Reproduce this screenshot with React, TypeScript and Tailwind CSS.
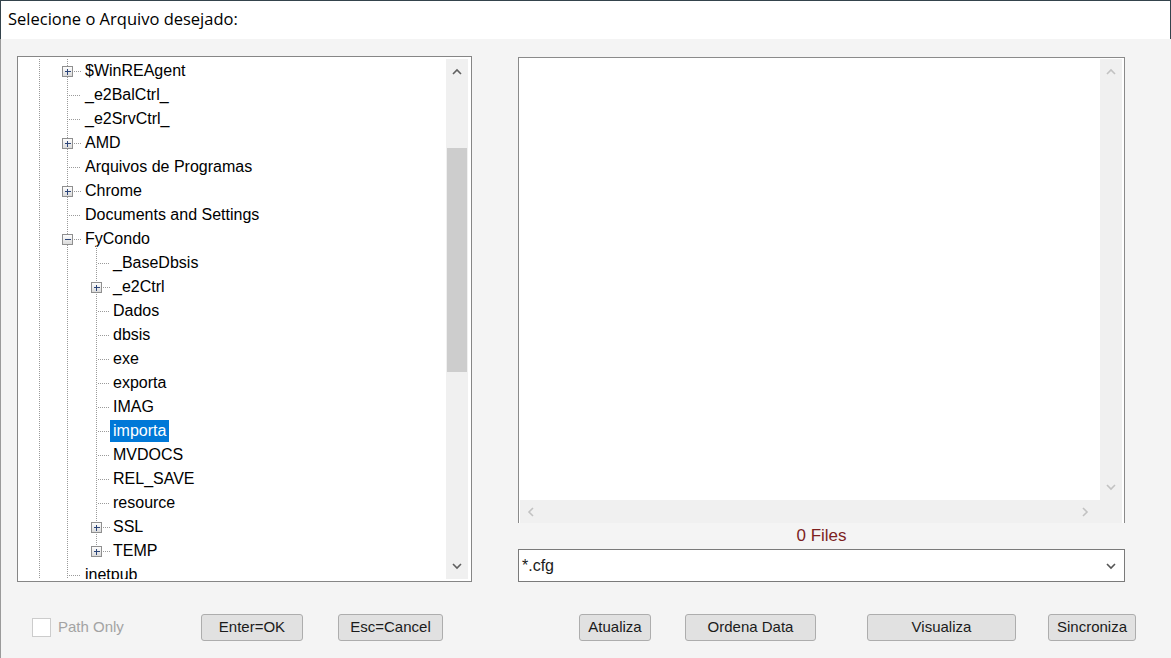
import React from 'react';

type TreeNode = {
  name: string;
  level: 2 | 3;
  toggle?: '+' | '-';
  selected?: boolean;
};

const nodes: TreeNode[] = [
  { name: '$WinREAgent', level: 2, toggle: '+' },
  { name: '_e2BalCtrl_', level: 2 },
  { name: '_e2SrvCtrl_', level: 2 },
  { name: 'AMD', level: 2, toggle: '+' },
  { name: 'Arquivos de Programas', level: 2 },
  { name: 'Chrome', level: 2, toggle: '+' },
  { name: 'Documents and Settings', level: 2 },
  { name: 'FyCondo', level: 2, toggle: '-' },
  { name: '_BaseDbsis', level: 3 },
  { name: '_e2Ctrl', level: 3, toggle: '+' },
  { name: 'Dados', level: 3 },
  { name: 'dbsis', level: 3 },
  { name: 'exe', level: 3 },
  { name: 'exporta', level: 3 },
  { name: 'IMAG', level: 3 },
  { name: 'importa', level: 3, selected: true },
  { name: 'MVDOCS', level: 3 },
  { name: 'REL_SAVE', level: 3 },
  { name: 'resource', level: 3 },
  { name: 'SSL', level: 3, toggle: '+' },
  { name: 'TEMP', level: 3, toggle: '+' },
  { name: 'inetpub', level: 2 },
];

const ROW = 24;
const X1 = 19.5;
const X2 = 47.5;
const X3 = 76.5;

// dotted connector lines + expander boxes of the tree
const TreeLines = () => {
  const h = nodes.length * ROW + 10;
  const cy = (i: number) => i * ROW + 12.5;
  const dot = { stroke: '#9a9a9a', strokeWidth: 1, strokeDasharray: '1 1' };
  const fy = nodes.findIndex((n) => n.name === 'FyCondo');
  const temp = nodes.findIndex((n) => n.name === 'TEMP');

  return (
    <svg className="pointer-events-none absolute left-0 top-0" width={110} height={h} shapeRendering="crispEdges">
      <defs>
        <linearGradient id="box" x1="0" y1="0" x2="0" y2="1">
          <stop offset="0" stopColor="#ffffff" />
          <stop offset="1" stopColor="#d9d9d9" />
        </linearGradient>
      </defs>
      <line x1={X1} y1={0} x2={X1} y2={h} {...dot} />
      <line x1={X2} y1={0} x2={X2} y2={h} {...dot} />
      <line x1={X3} y1={cy(fy) + 6} x2={X3} y2={cy(temp)} {...dot} />
      {nodes.map((n, i) => {
        const cx = n.level === 2 ? X2 : X3;
        const end = n.level === 2 ? 61 : 90;
        const y = cy(i);
        return (
          <g key={n.name}>
            <line x1={n.toggle ? cx + 6 : cx + 1} y1={y} x2={end} y2={y} {...dot} />
            {n.toggle && (
              <g>
                <rect x={cx - 5} y={y - 5} width={10} height={10} fill="url(#box)" stroke="#8f8f8f" />
                <line x1={cx - 3} y1={y} x2={cx + 3} y2={y} stroke="#2c4578" />
                {n.toggle === '+' && (
                  <line x1={cx} y1={y - 3} x2={cx} y2={y + 3} stroke="#2c4578" />
                )}
              </g>
            )}
          </g>
        );
      })}
    </svg>
  );
};

const Chevron = ({ dir, color }: { dir: 'up' | 'down' | 'left' | 'right'; color: string }) => {
  const d = {
    up: 'M1 6 L5 2 L9 6',
    down: 'M1 2 L5 6 L9 2',
    left: 'M6 1 L2 5 L6 9',
    right: 'M2 1 L6 5 L2 9',
  }[dir];
  const w = dir === 'up' || dir === 'down' ? 10 : 8;
  const h = dir === 'up' || dir === 'down' ? 8 : 10;
  return (
    <svg width={w} height={h} viewBox={`0 0 ${w} ${h}`}>
      <path d={d} fill="none" stroke={color} strokeWidth={1.6} />
    </svg>
  );
};

const Button = ({ label, className }: { label: string; className: string }) => (
  <div
    className={`flex h-[27px] items-center justify-center rounded-[3px] border border-[#adadad] bg-[#e1e1e1] text-[15px] text-[#1b1b1b] ${className}`}
  >
    {label}
  </div>
);

const App = () => {
  return (
    <div className="flex h-[658px] w-[1171px] flex-col overflow-hidden bg-[#f4f4f4] font-['Liberation_Sans',Arial,sans-serif]">
      <div className="flex h-[39px] shrink-0 items-center border-l border-r border-t border-[#34434c] bg-white pl-[7px] pb-[2px] font-['Open_Sans',sans-serif] text-[16.5px] text-black">
        Selecione o Arquivo desejado:
      </div>

      <div className="flex flex-1 flex-col border-l border-[#9a9a9a]">
        <div className="flex pt-[17px]">
          {/* folder tree */}
          <div className="ml-[16px] flex h-[526px] w-[455px] border border-[#868686] bg-white py-[2px] pl-[2px] pr-[3px]">
            <div className="relative flex-1 overflow-hidden">
              <TreeLines />
              <div className="flex flex-col">
                {nodes.map((n) => (
                  <div
                    key={n.name}
                    className={`flex h-[24px] shrink-0 items-center ${n.level === 2 ? 'pl-[62px]' : 'pl-[90px]'}`}
                  >
                    <span
                      className={`h-[22px] px-[3px] text-[16px] leading-[22px] ${
                        n.selected ? 'bg-[#0078d7] text-white' : 'text-black'
                      }`}
                    >
                      {n.name}
                    </span>
                  </div>
                ))}
              </div>
            </div>
            <div className="flex w-[22px] flex-col bg-[#f0f0f0]">
              <div className="flex h-[26px] items-center justify-center">
                <Chevron dir="up" color="#606060" />
              </div>
              <div className="mx-[1px] mt-[63px] h-[224px] bg-[#cdcdcd]" />
              <div className="flex-1" />
              <div className="flex h-[26px] items-center justify-center">
                <Chevron dir="down" color="#606060" />
              </div>
            </div>
          </div>

          {/* file list column */}
          <div className="ml-[46px] flex w-[607px] flex-col">
            <div className="mt-[1px] flex h-[466px] flex-col border-l border-r border-t border-[#8a8a8a] bg-white pl-[1px] pr-[2px] pt-[1px]">
              <div className="flex flex-1">
                <div className="flex-1 bg-white" />
                <div className="flex w-[22px] flex-col justify-between bg-[#f0f0f0]">
                  <div className="flex h-[26px] items-center justify-center">
                    <Chevron dir="up" color="#c2c2c2" />
                  </div>
                  <div className="flex h-[26px] items-center justify-center">
                    <Chevron dir="down" color="#c2c2c2" />
                  </div>
                </div>
              </div>
              <div className="flex h-[23px] items-center justify-between bg-[#f0f0f0] pl-[7px] pr-[33px]">
                <Chevron dir="left" color="#c2c2c2" />
                <Chevron dir="right" color="#c2c2c2" />
              </div>
            </div>
            <div className="flex h-[26px] items-center justify-center text-[17px] text-[#7d1f1f]">0 Files</div>
            <div className="flex h-[33px] items-center justify-between border border-[#7a7a7a] bg-white pl-[3px] pr-[8px] text-[16px] text-[#1a1a1a]">
              <span>*.cfg</span>
              <Chevron dir="down" color="#555555" />
            </div>
          </div>
        </div>

        {/* bottom bar */}
        <div className="mt-[32px] flex items-center">
          <div className="ml-[31px] h-[19px] w-[19px] border border-[#cccccc] bg-white" />
          <span className="ml-[7px] w-[143px] text-[15px] text-[#a3a3a3]">Path Only</span>
          <Button label="Enter=OK" className="w-[102px]" />
          <Button label="Esc=Cancel" className="ml-[35px] w-[105px]" />
          <Button label="Atualiza" className="ml-[136px] w-[72px]" />
          <Button label="Ordena Data" className="ml-[34px] w-[131px]" />
          <Button label="Visualiza" className="ml-[51px] w-[149px]" />
          <Button label="Sincroniza" className="ml-[32px] w-[88px]" />
        </div>
      </div>
    </div>
  );
};

export default App;
